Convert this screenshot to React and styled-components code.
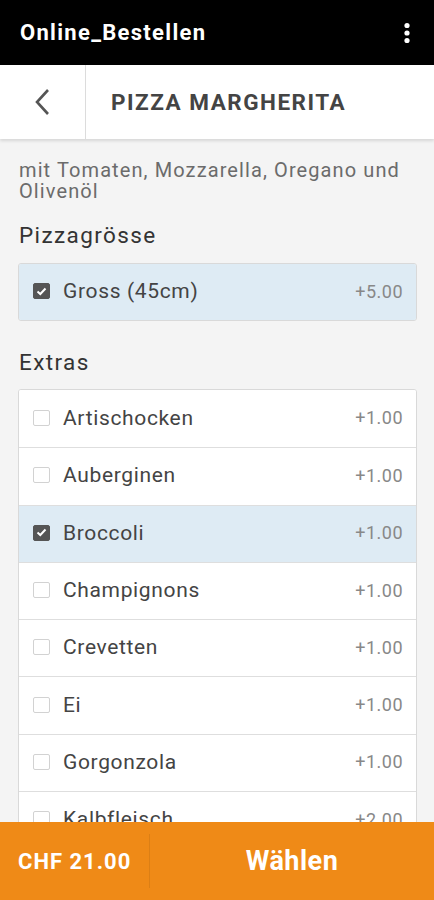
import React from "react"
import styled, { createGlobalStyle } from "styled-components"

const GlobalStyle = createGlobalStyle`
  html, body {
    margin: 0;
    padding: 0;
    background: #f4f4f4;
    font-family: Roboto, "Noto Sans", sans-serif;
  }
  * {
    box-sizing: border-box;
  }
`

const Screen = styled.div`
  display: flex;
  flex-direction: column;
  width: 434px;
  height: 900px;
  overflow: hidden;
  background: #f4f4f4;
`

const AppBar = styled.div`
  display: flex;
  align-items: center;
  justify-content: space-between;
  height: 65px;
  padding: 0 23px 0 20px;
  background: #000;
  color: #fff;
  flex-shrink: 0;
`

const AppTitle = styled.div`
  font-size: 22px;
  font-weight: 700;
  letter-spacing: 1.3px;
`

const Header = styled.div`
  display: flex;
  height: 74px;
  background: #fff;
  flex-shrink: 0;
  box-shadow: 0 2px 3px rgba(0, 0, 0, 0.12);
  position: relative;
  z-index: 1;
`

const BackButton = styled.div`
  display: flex;
  align-items: center;
  justify-content: center;
  width: 86px;
  border-right: 1px solid #dcdcdc;
  padding-right: 1px;
`

const PageTitle = styled.h1`
  margin: 0;
  display: flex;
  align-items: center;
  padding-left: 25px;
  font-size: 22.5px;
  font-weight: 700;
  color: #444;
  letter-spacing: 1.5px;
`

const Content = styled.div`
  flex: 1;
  overflow: hidden;
  padding: 21px 17px 0 18px;
`

const Description = styled.p`
  margin: 0 0 0 1px;
  font-size: 20px;
  line-height: 21px;
  letter-spacing: 1.1px;
  color: #6b6b6b;
`

const SectionTitle = styled.h2`
  margin: ${p => p.$top}px 0 ${p => p.$bottom}px 1px;
  font-size: 22.5px;
  font-weight: 400;
  color: #333;
  line-height: 26px;
  letter-spacing: 1.4px;
`

const OptionList = styled.div`
  border: 1px solid #d9d9d9;
  border-radius: 3px;
  background: #fff;
  overflow: hidden;
`

const Row = styled.div`
  display: flex;
  align-items: center;
  height: ${p => (p.$single ? 56 : 57.3)}px;
  padding: 0 13px 2px 14px;
  background: ${p => (p.$checked ? "#deebf4" : "#fff")};
  border-top: ${p => (p.$first ? "none" : "1px solid #dedede")};
`

const Box = styled.span`
  display: flex;
  align-items: center;
  justify-content: center;
  width: 17px;
  height: 16px;
  border-radius: 2px;
  border: 1px solid ${p => (p.$checked ? "#555" : "#d2d2d2")};
  background: ${p => (p.$checked ? "#555" : "#fff")};
  flex-shrink: 0;
`

const Label = styled.span`
  flex: 1;
  margin-left: 13px;
  font-size: 21px;
  letter-spacing: 0.65px;
  color: #444;
`

const Price = styled.span`
  font-size: 18px;
  letter-spacing: 0.5px;
  color: #888;
`

const BottomBar = styled.div`
  display: flex;
  height: 78px;
  background: #ef8a17;
  color: #fff;
  flex-shrink: 0;
`

const Total = styled.div`
  display: flex;
  align-items: center;
  width: 150px;
  padding-left: 18px;
  font-size: 22px;
  font-weight: 700;
  letter-spacing: 1px;
  border-right: 1px solid rgba(0, 0, 0, 0.08);
  margin: 12px 0;
`

const ChooseButton = styled.div`
  flex: 1;
  display: flex;
  align-items: center;
  justify-content: center;
  font-size: 27px;
  font-weight: 700;
  letter-spacing: 0.5px;
`

const Kebab = () => (
  <svg width="8" height="22" viewBox="0 0 8 22">
    <circle cx="4" cy="3.5" r="2.6" fill="#fff" />
    <circle cx="4" cy="11" r="2.6" fill="#fff" />
    <circle cx="4" cy="18.5" r="2.6" fill="#fff" />
  </svg>
)

const Chevron = () => (
  <svg width="18" height="28" viewBox="0 0 18 28">
    <path d="M15 2 L4 14 L15 26" fill="none" stroke="#555" strokeWidth="2.6" />
  </svg>
)

const Check = () => (
  <svg width="11" height="9" viewBox="0 0 11 9">
    <path d="M1.5 4.5 L4.3 7 L9.5 1.5" fill="none" stroke="#fff" strokeWidth="2" />
  </svg>
)

const Option = ({ label, price, checked, first, single }) => (
  <Row $checked={checked} $first={first} $single={single}>
    <Box $checked={checked}>{checked && <Check />}</Box>
    <Label>{label}</Label>
    <Price>{price}</Price>
  </Row>
)

const extras = [
  { label: "Artischocken", price: "+1.00" },
  { label: "Auberginen", price: "+1.00" },
  { label: "Broccoli", price: "+1.00", checked: true },
  { label: "Champignons", price: "+1.00" },
  { label: "Crevetten", price: "+1.00" },
  { label: "Ei", price: "+1.00" },
  { label: "Gorgonzola", price: "+1.00" },
  { label: "Kalbfleisch", price: "+2.00" },
]

export default function App() {
  return (
    <Screen>
      <GlobalStyle />
      <AppBar>
        <AppTitle>Online_Bestellen</AppTitle>
        <Kebab />
      </AppBar>
      <Header>
        <BackButton>
          <Chevron />
        </BackButton>
        <PageTitle>PIZZA MARGHERITA</PageTitle>
      </Header>
      <Content>
        <Description>mit Tomaten, Mozzarella, Oregano und Olivenöl</Description>
        <SectionTitle $top={20} $bottom={15}>Pizzagrösse</SectionTitle>
        <OptionList>
          <Option label="Gross (45cm)" price="+5.00" checked first single />
        </OptionList>
        <SectionTitle $top={28} $bottom={14}>Extras</SectionTitle>
        <OptionList>
          {extras.map((e, i) => (
            <Option key={e.label} {...e} first={i === 0} />
          ))}
        </OptionList>
      </Content>
      <BottomBar>
        <Total>CHF 21.00</Total>
        <ChooseButton>Wählen</ChooseButton>
      </BottomBar>
    </Screen>
  )
}
